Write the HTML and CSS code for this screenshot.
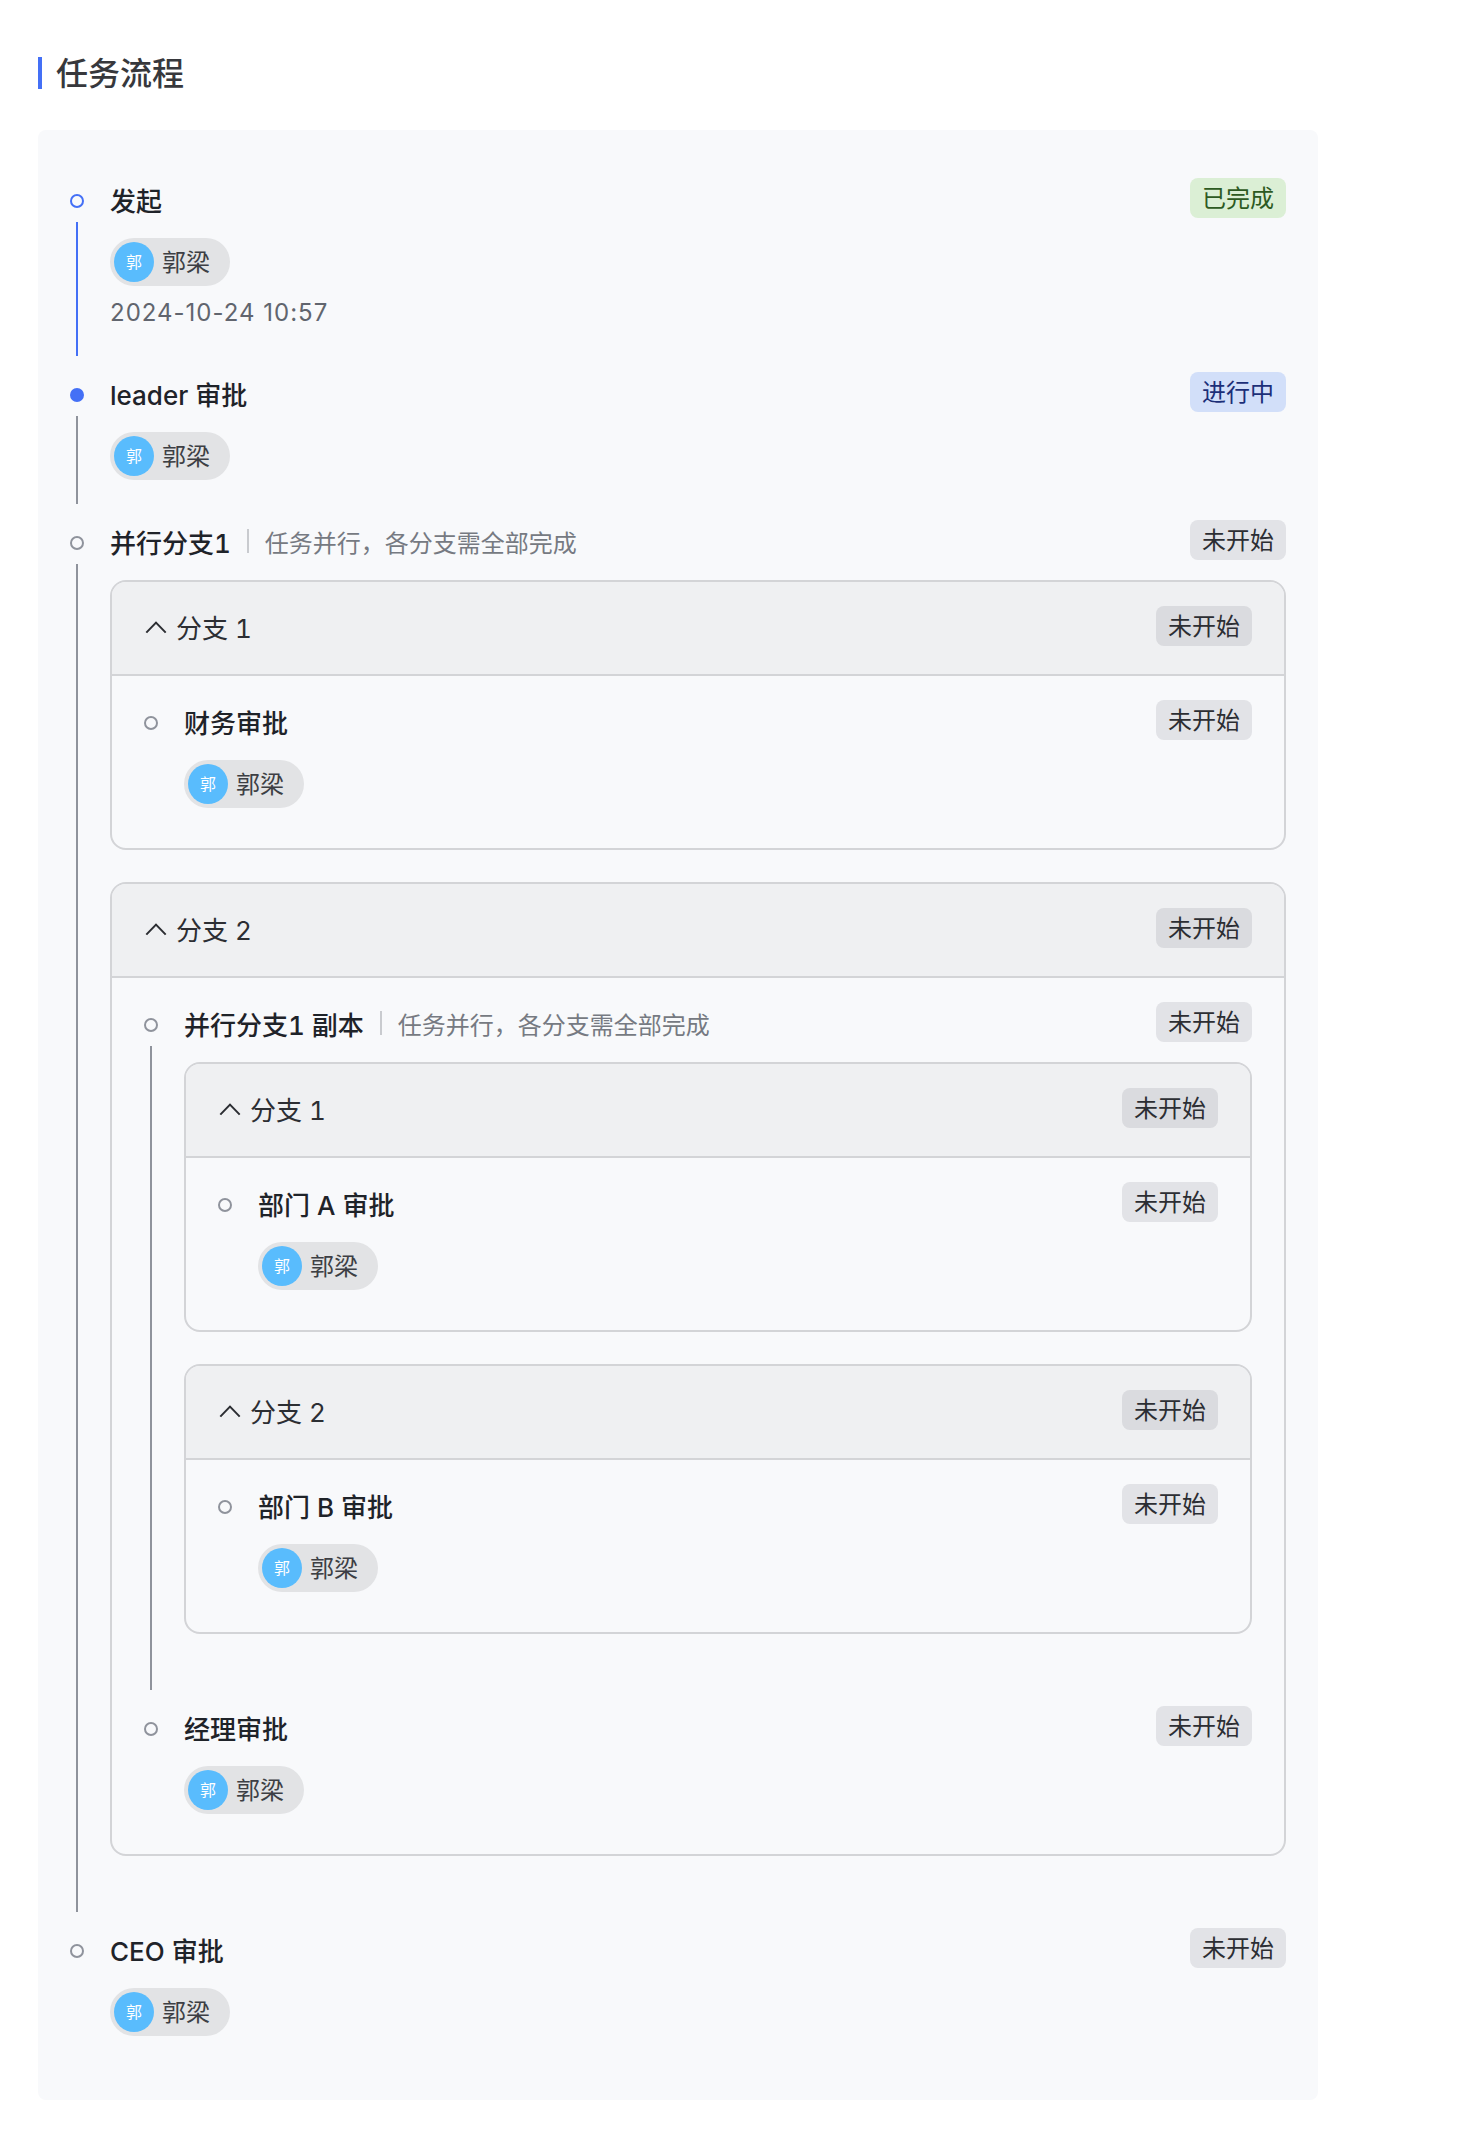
FILE: index.html
```html
<!DOCTYPE html>
<html lang="zh-CN">
<head>
<meta charset="utf-8">
<title>任务流程</title>
<link rel="stylesheet" href="styles.css">
</head>
<body>
<main class="page">
  <h1 class="page-title">任务流程</h1>
  <section class="flow-card">

    <div class="item item-done">
      <div class="rail"><span class="dot"></span><span class="line"></span></div>
      <div class="content">
        <div class="head"><div class="title">发起</div><span class="tag tag-green">已完成</span></div>
        <div class="pill"><span class="avatar">郭</span><span class="name">郭梁</span></div>
        <div class="date">2024-10-24 10:57</div>
      </div>
    </div>

    <div class="item item-active">
      <div class="rail"><span class="dot"></span><span class="line"></span></div>
      <div class="content">
        <div class="head"><div class="title">leader 审批</div><span class="tag tag-blue">进行中</span></div>
        <div class="pill"><span class="avatar">郭</span><span class="name">郭梁</span></div>
      </div>
    </div>

    <div class="item">
      <div class="rail"><span class="dot"></span><span class="line"></span></div>
      <div class="content">
        <div class="head">
          <div class="title">并行分支1<span class="sep"></span><span class="desc">任务并行，各分支需全部完成</span></div>
          <span class="tag">未开始</span>
        </div>
        <div class="branches">

          <div class="branch">
            <div class="branch-head">
              <div class="branch-name"><svg class="chev" viewBox="0 0 24 24"><polyline points="2.3,16.6 12,6.6 21.7,16.6"/></svg>分支 1</div>
              <span class="tag">未开始</span>
            </div>
            <div class="branch-body">
              <div class="item item-last">
                <div class="rail"><span class="dot"></span></div>
                <div class="content">
                  <div class="head"><div class="title">财务审批</div><span class="tag">未开始</span></div>
                  <div class="pill"><span class="avatar">郭</span><span class="name">郭梁</span></div>
                </div>
              </div>
            </div>
          </div>

          <div class="branch">
            <div class="branch-head">
              <div class="branch-name"><svg class="chev" viewBox="0 0 24 24"><polyline points="2.3,16.6 12,6.6 21.7,16.6"/></svg>分支 2</div>
              <span class="tag">未开始</span>
            </div>
            <div class="branch-body">
              <div class="item">
                <div class="rail"><span class="dot"></span><span class="line"></span></div>
                <div class="content">
                  <div class="head">
                    <div class="title">并行分支1 副本<span class="sep"></span><span class="desc">任务并行，各分支需全部完成</span></div>
                    <span class="tag">未开始</span>
                  </div>
                  <div class="branches">
                    <div class="branch">
                      <div class="branch-head">
                        <div class="branch-name"><svg class="chev" viewBox="0 0 24 24"><polyline points="2.3,16.6 12,6.6 21.7,16.6"/></svg>分支 1</div>
                        <span class="tag">未开始</span>
                      </div>
                      <div class="branch-body">
                        <div class="item item-last">
                          <div class="rail"><span class="dot"></span></div>
                          <div class="content">
                            <div class="head"><div class="title">部门 A 审批</div><span class="tag">未开始</span></div>
                            <div class="pill"><span class="avatar">郭</span><span class="name">郭梁</span></div>
                          </div>
                        </div>
                      </div>
                    </div>
                    <div class="branch">
                      <div class="branch-head">
                        <div class="branch-name"><svg class="chev" viewBox="0 0 24 24"><polyline points="2.3,16.6 12,6.6 21.7,16.6"/></svg>分支 2</div>
                        <span class="tag">未开始</span>
                      </div>
                      <div class="branch-body">
                        <div class="item item-last">
                          <div class="rail"><span class="dot"></span></div>
                          <div class="content">
                            <div class="head"><div class="title">部门 B 审批</div><span class="tag">未开始</span></div>
                            <div class="pill"><span class="avatar">郭</span><span class="name">郭梁</span></div>
                          </div>
                        </div>
                      </div>
                    </div>
                  </div>
                </div>
              </div>
              <div class="item item-last">
                <div class="rail"><span class="dot"></span></div>
                <div class="content">
                  <div class="head"><div class="title">经理审批</div><span class="tag">未开始</span></div>
                  <div class="pill"><span class="avatar">郭</span><span class="name">郭梁</span></div>
                </div>
              </div>
            </div>
          </div>

        </div>
      </div>
    </div>

    <div class="item item-last">
      <div class="rail"><span class="dot"></span></div>
      <div class="content">
        <div class="head"><div class="title">CEO 审批</div><span class="tag">未开始</span></div>
        <div class="pill"><span class="avatar">郭</span><span class="name">郭梁</span></div>
      </div>
    </div>

  </section>
</main>
</body>
</html>
```

FILE: styles.css
```css
* { box-sizing: border-box; }
html, body { margin: 0; padding: 0; background: #fff; }
body {
  font-family: Inter, "Noto Sans CJK SC", sans-serif;
  font-variant-numeric: tabular-nums;
  color: #1f2329;
}
.page {
  width: 1472px;
  height: 2135px;
  padding: 57px 154px 0 38px;
}
.page-title {
  margin: 0 0 41px;
  height: 32px;
  border-left: 4px solid #4470f6;
  padding-left: 14px;
  font-size: 32px;
  line-height: 34px;
  font-weight: 500;
  color: #37383c;
}
.flow-card {
  background: #f8f9fb;
  border-radius: 8px;
  padding: 48px 32px 24px;
}
.item {
  display: flex;
  padding-bottom: 40px;
}
.rail {
  flex: 0 0 40px;
  display: flex;
  flex-direction: column;
  align-items: flex-start;
}
.dot {
  flex: none;
  width: 14px;
  height: 14px;
  margin-top: 16px;
  border-radius: 50%;
  border: 2px solid #8f939c;
}
.line {
  flex: 1;
  width: 2px;
  margin: 14px 0 -24px 6px;
  background: #8f939c;
}
.item-done .dot { border-color: #4470f6; }
.item-done .line { background: #4470f6; }
.item-active .dot { background: #4470f6; border-color: #4470f6; }
.content { flex: 1; min-width: 0; }
.head {
  display: flex;
  justify-content: space-between;
  align-items: flex-start;
  min-height: 44px;
}
.title {
  display: flex;
  align-items: center;
  height: 42px;
  font-size: 26px;
  font-weight: 500;
  color: #1f2329;
  white-space: pre;
}
.sep {
  width: 2px;
  height: 24px;
  margin: 0 16px 0 16px;
  background: #c9cbcf;
}
.desc {
  font-size: 24px;
  font-weight: 400;
  color: #767a82;
}
.tag {
  flex: none;
  height: 40px;
  padding: 0 12px;
  border-radius: 8px;
  font-size: 24px;
  line-height: 42px;
  color: #2c2e33;
  background: rgba(8, 13, 30, 0.09);
}
.tag-green { background: #dbefd5; color: #2d5a22; }
.tag-blue { background: #d2dff9; color: #1c2f78; }
.pill {
  display: flex;
  align-items: center;
  width: 120px;
  height: 48px;
  margin-top: 16px;
  padding: 4px;
  border-radius: 24px;
  background: #e2e3e5;
}
.avatar {
  width: 40px;
  height: 40px;
  border-radius: 50%;
  background: #59bcfd;
  color: #fff;
  font-size: 16px;
  line-height: 40px;
  text-align: center;
}
.name {
  margin-left: 8px;
  font-size: 24px;
  line-height: 42px;
  height: 40px;
  color: #3d3f44;
}
.date {
  margin-top: 6px;
  height: 40px;
  font-size: 24px;
  line-height: 42px;
  font-variant-numeric: normal;
  letter-spacing: 1px;
  color: #61656e;
}
.branches { margin-top: 16px; }
.branch {
  margin-bottom: 32px;
  border: 2px solid #d3d4d7;
  border-radius: 16px;
  overflow: hidden;
}
.branch-head {
  display: flex;
  justify-content: space-between;
  align-items: flex-start;
  height: 94px;
  padding: 24px 32px 0;
  background: #eff0f2;
  border-bottom: 2px solid #d3d4d7;
}
.branch-name {
  display: flex;
  align-items: center;
  height: 40px;
  font-size: 26px;
  color: #2c2e33;
  white-space: pre;
}
.chev {
  width: 24px;
  height: 24px;
  margin: 4px 8px 0 0;
  fill: none;
  stroke: #2c2e33;
  stroke-width: 2;
}
.branch-body { padding: 24px 32px 0; }
```
